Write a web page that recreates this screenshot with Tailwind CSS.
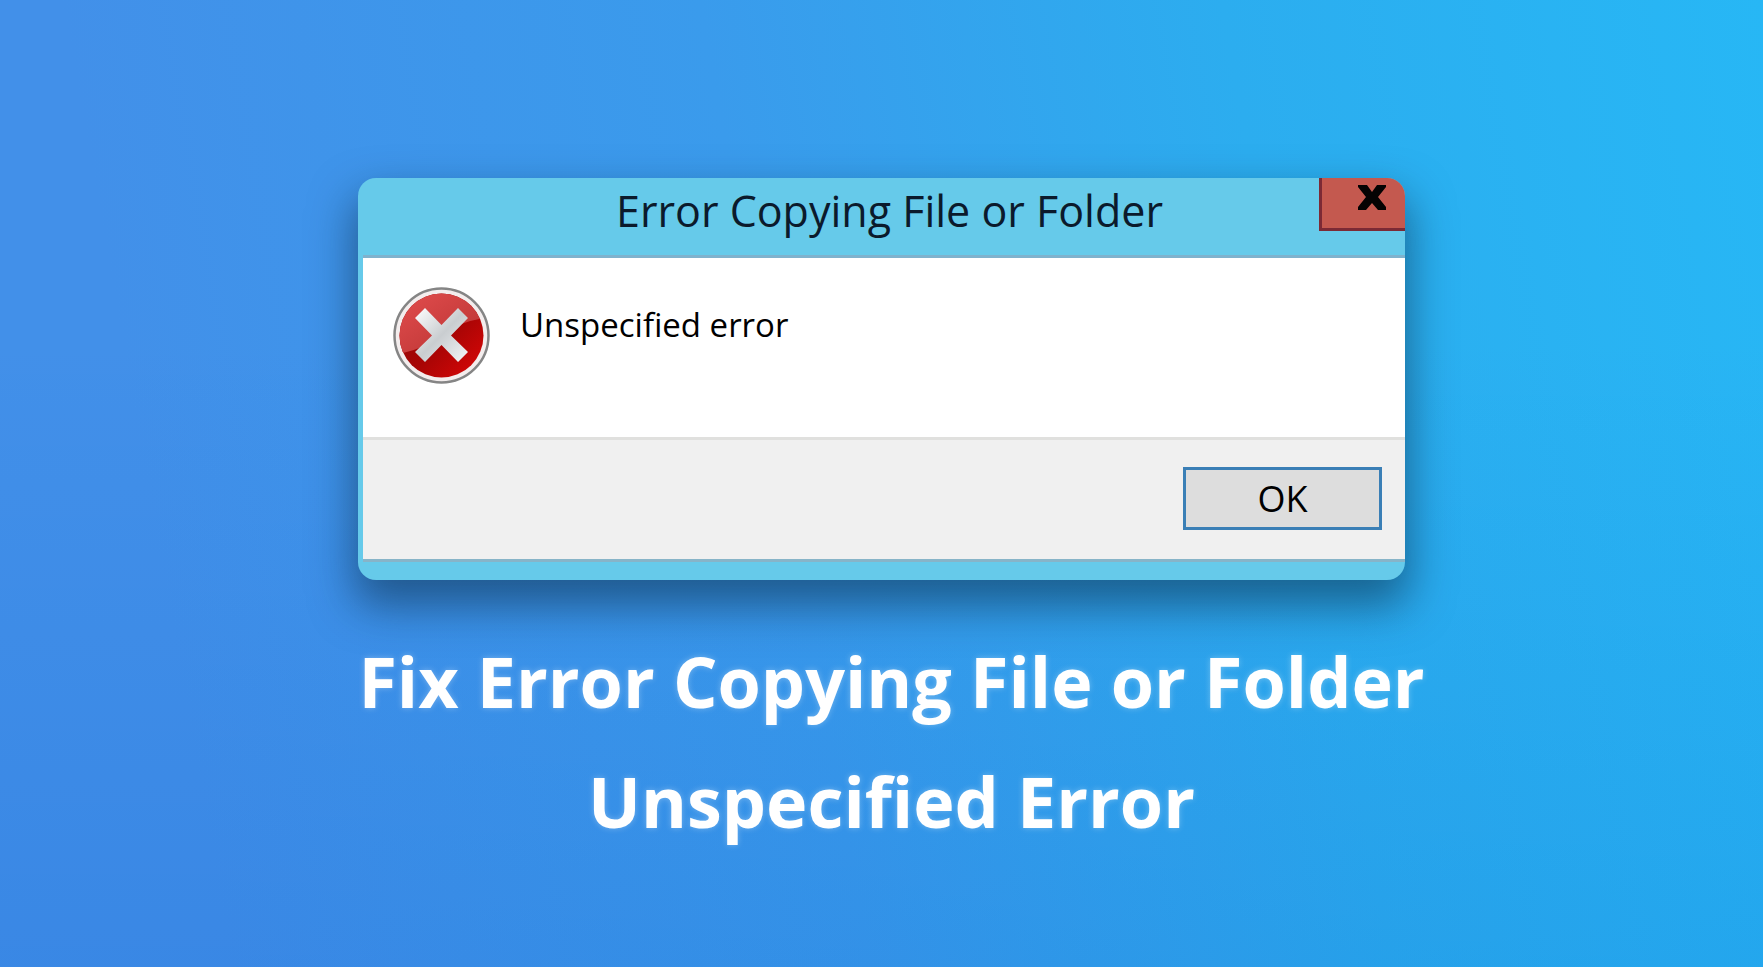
<!DOCTYPE html>
<html lang="en">
<head>
<meta charset="utf-8">
<meta name="viewport" content="width=device-width, initial-scale=1">
<title>Fix Error Copying File or Folder Unspecified Error</title>
<script src="https://cdn.jsdelivr.net/npm/@tailwindcss/browser@4"></script>
</head>
<body class="min-h-screen bg-[linear-gradient(to_bottom,#00000000_35%,#0050c822),linear-gradient(80deg,#4290e9_12%,#3a9bec_45%,#2cadef_72%,#27b7f5)] font-['Open_Sans','Noto_Sans',sans-serif]">
<main class="flex min-h-screen flex-col items-center px-6 pt-[178px]">
  <section role="dialog" aria-labelledby="dialog-title" class="w-full max-w-[1047px] overflow-hidden rounded-[18px] bg-[#66caea] shadow-[0_22px_44px_4px_#0a284088]">
    <header class="grid h-[77px] grid-cols-[86px_1fr_86px] items-start">
      <h2 id="dialog-title" class="col-start-2 whitespace-nowrap pt-[3px] pl-4 text-center text-[43px] leading-[60px] text-[#0b1a2c]">Error Copying File or Folder</h2>
      <button type="button" aria-label="Close" class="flex h-[53px] justify-center border-b-3 border-l-3 border-[#7c2a35] bg-[#c4594f] pt-[7px] pl-4">
        <svg class="h-[25px] w-[28px]" viewBox="0 0 28 25" fill="#050303"><path d="M0 0h9l5 7 5-7h9v2l-8 10 8 10v3h-8l-6-7-6 7H0v-3l8-10L0 2z"/></svg>
      </button>
    </header>
    <div class="ml-[5px] border-y-3 border-t-[#7fb2cd] border-b-[#87b4c8] bg-white">
      <div class="flex h-[179px] items-start gap-[30px] pt-[29px] pl-[30px]">
        <svg class="size-[97px] shrink-0" viewBox="0 0 97 97" aria-hidden="true">
          <defs>
            <linearGradient id="red" x1="0" y1="0" x2="1" y2="1"><stop offset=".2" stop-color="#960808"/><stop offset=".55" stop-color="#a80505"/><stop offset=".85" stop-color="#cc0606"/></linearGradient>
            <linearGradient id="shine" x1="0" y1="0" x2="1" y2="1"><stop stop-color="#e65050"/><stop offset="1" stop-color="#b53030"/></linearGradient>
            <linearGradient id="cross" x1="0" y1="0" x2="1" y2="1"><stop stop-color="#fff"/><stop offset=".5" stop-color="#c9cdd0"/><stop offset="1" stop-color="#f4f6f8"/></linearGradient>
            <clipPath id="disc"><circle cx="48.500" cy="48.500" r="42"/></clipPath>
          </defs>
          <circle cx="48.500" cy="48.500" r="47" fill="#f3eded" stroke="#858585" stroke-width="2.500"/>
          <circle cx="48.500" cy="48.500" r="42" fill="url(#red)"/>
          <path d="M0 0h97v30Q66 34 48 48T10 66H0z" fill="url(#shine)" clip-path="url(#disc)"/>
          <path d="M32 21 48.500 38 65 21 75 31 58 48.500 75 65 65 75 48.500 58 32 75 22 65 39 48.500 22 31z" fill="url(#cross)"/>
        </svg>
        <p class="text-[33px] leading-[76px] text-black">Unspecified error</p>
      </div>
      <footer class="flex justify-end border-t-3 border-[#e0e0de] bg-[#f0f0f0] pt-[27px] pr-[23px] pb-[29px]">
        <button type="button" class="h-[63px] w-[199px] border-3 border-[#3a7fb6] bg-[#dddddd] text-[36px] leading-[56px] text-black">OK</button>
      </footer>
    </div>
    <div class="h-[18px]"></div>
  </section>
  <h1 class="mt-[41px] pl-5 text-center text-[70px] leading-[120px] font-bold text-white [text-shadow:0_0_6px_#ffffff50]">Fix Error Copying File or Folder<br>Unspecified Error</h1>
</main>
</body>
</html>
